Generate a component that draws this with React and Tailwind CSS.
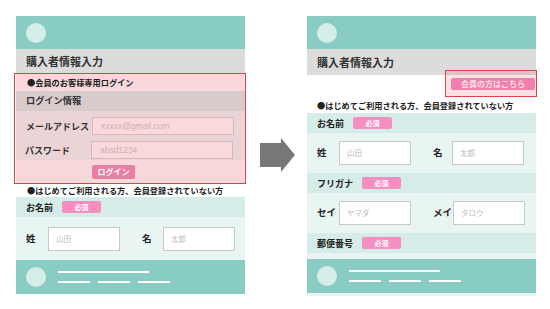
import React from 'react';

const jp = { fontFamily: '"Noto Sans CJK JP", "Noto Sans", sans-serif' };
const latin = { fontFamily: '"Liberation Sans", sans-serif' };

const Header = () => (
  <div className="h-[33px] bg-[#88ccc3] flex items-center pl-[10px]">
    <div className="w-5 h-5 rounded-full bg-[#d5ede9]" />
  </div>
);

const Footer = () => (
  <div className="h-[34px] bg-[#88ccc3] flex items-center pl-[10px]">
    <div className="w-5 h-5 rounded-full bg-[#d5ede9]" />
    <div className="ml-[12px] flex flex-col gap-[8px]">
      <div className="w-[91px] h-[2px] bg-white" />
      <div className="flex gap-[8px]">
        <div className="w-[32px] h-[2px] bg-white" />
        <div className="w-[32px] h-[2px] bg-white" />
        <div className="w-[32px] h-[2px] bg-white" />
      </div>
    </div>
  </div>
);

const Badge = () => (
  <span className="ml-[9px] w-[39px] h-[12px] rounded-[2px] bg-[#f48fc0] text-white text-[7px] font-bold flex items-center justify-center leading-none">
    必須
  </span>
);

const LabelRow = ({ label }) => (
  <div className="h-[20px] bg-[#d5ece8] flex items-center pl-[10px]">
    <span className="text-[9px] font-bold text-[#222] leading-none">{label}</span>
    <Badge />
  </div>
);

const Field = ({ label, placeholder, labelW }) => (
  <div className="flex items-center">
    <span className={`${labelW} text-[9.5px] font-bold text-[#222] leading-none`}>{label}</span>
    <div className="w-[72px] h-[24px] bg-white border border-[#c8c8c8] flex items-center pl-[7px] text-[7.5px] text-[#bbbbbb]">
      {placeholder}
    </div>
  </div>
);

const FieldRow = ({ h, a, b }) => (
  <div className={`${h} bg-[#e8f5f3] flex items-center pl-[10px] gap-[22px]`}>
    <Field {...a} />
    <Field {...b} />
  </div>
);

const Arrow = () => (
  <svg width="35" height="34" viewBox="0 0 35 34" className="mt-[122px] ml-[15px] mr-[12px] shrink-0">
    <polygon points="0,5 21,5 21,0 35,17 21,34 21,29 0,29" fill="#777777" />
  </svg>
);

const LeftPanel = () => (
  <div className="w-[229px] shrink-0">
    <Header />
    <div className="h-[24px] bg-[#dcdcdc] flex items-center pl-[10px] text-[11px] font-bold text-[#333]">
      購入者情報入力
    </div>
    <div className="relative">
      <div className="h-[18px] bg-[#f8d9db] flex items-center pl-[11px] text-[8.2px] font-bold text-[#222]">
        ●会員のお客様専用ログイン
      </div>
      <div className="h-[20px] bg-[#d8cbcb] flex items-center pl-[10px] text-[9.2px] font-bold text-[#333]">
        ログイン情報
      </div>
      <div className="bg-[#ebd4d5] pt-[6px] pb-[1px] flex flex-col gap-[6px]">
        <div className="flex items-center pl-[10px]">
          <span className="w-[66px] text-[9px] font-bold text-[#333] leading-none">メールアドレス</span>
          <div
            className="w-[142px] h-[18px] bg-[#f8dadc] border border-[#d8b5b8] flex items-center pl-[8px] text-[8.5px] text-[#d2acb0]"
            style={latin}
          >
            xxxxx@gmail.com
          </div>
        </div>
        <div className="flex items-center pl-[9px]">
          <span className="w-[66px] text-[9px] font-bold text-[#333] leading-none">パスワード</span>
          <div
            className="w-[142px] h-[18px] bg-[#f8dadc] border border-[#d8b5b8] flex items-center pl-[8px] text-[8.5px] text-[#d2acb0]"
            style={latin}
          >
            absd1234
          </div>
        </div>
      </div>
      <div className="h-[24px] bg-[#f8d9db] pt-[5px] pl-[76px]">
        <div className="w-[43px] h-[14px] rounded-[2px] bg-[#ea7ea4] text-white text-[8px] font-bold flex items-center justify-center leading-none">
          ログイン
        </div>
      </div>
      <div className="absolute inset-y-0 -left-[2px] -right-[1px] border-[1.5px] border-[#d9444c] pointer-events-none" />
    </div>
    <div className="h-[13px] flex items-center pl-[11px] text-[8.2px] font-bold text-[#222]">
      ●はじめてご利用される方、会員登録されていない方
    </div>
    <LabelRow label="お名前" />
    <FieldRow
      h="h-[43px]"
      a={{ label: '姓', placeholder: '山田', labelW: 'w-[22px]' }}
      b={{ label: '名', placeholder: '太郎', labelW: 'w-[21px]' }}
    />
    <Footer />
  </div>
);

const RightPanel = () => (
  <div className="w-[229px] shrink-0 relative">
    <Header />
    <div className="h-[26px] bg-[#dcdcdc] flex items-center pl-[10px] text-[11px] font-bold text-[#333]">
      購入者情報入力
    </div>
    <div className="h-[22px] flex justify-end pr-[1px] pt-[3px]">
      <div className="w-[84px] h-[12px] rounded-[2px] bg-[#f28cbf] text-white text-[8px] font-bold flex items-center justify-center leading-none">
        会員の方はこちら
      </div>
    </div>
    <div className="h-[16px] flex items-center pl-[10px] text-[8.2px] font-bold text-[#222]">
      ●はじめてご利用される方、会員登録されていない方
    </div>
    <LabelRow label="お名前" />
    <FieldRow
      h="h-[40px]"
      a={{ label: '姓', placeholder: '山田', labelW: 'w-[22px]' }}
      b={{ label: '名', placeholder: '太郎', labelW: 'w-[19px]' }}
    />
    <LabelRow label="フリガナ" />
    <FieldRow
      h="h-[40px]"
      a={{ label: 'セイ', placeholder: 'ヤマダ', labelW: 'w-[22px]' }}
      b={{ label: 'メイ', placeholder: 'タロウ', labelW: 'w-[20px]' }}
    />
    <LabelRow label="郵便番号" />
    <div className="h-[6px] bg-[#e8f5f3]" />
    <Footer />
    <div className="h-[3px] bg-[#e8f5f3]" />
    <div className="absolute top-[54px] left-[138px] w-[92px] h-[27px] border-[1.5px] border-[#d9444c] bg-[#e5353d]/15 pointer-events-none" />
  </div>
);

export default function App() {
  return (
    <div className="w-[550px] h-[309px] bg-white flex items-start pt-[16px] pl-[16px] overflow-hidden" style={jp}>
      <LeftPanel />
      <Arrow />
      <RightPanel />
    </div>
  );
}
